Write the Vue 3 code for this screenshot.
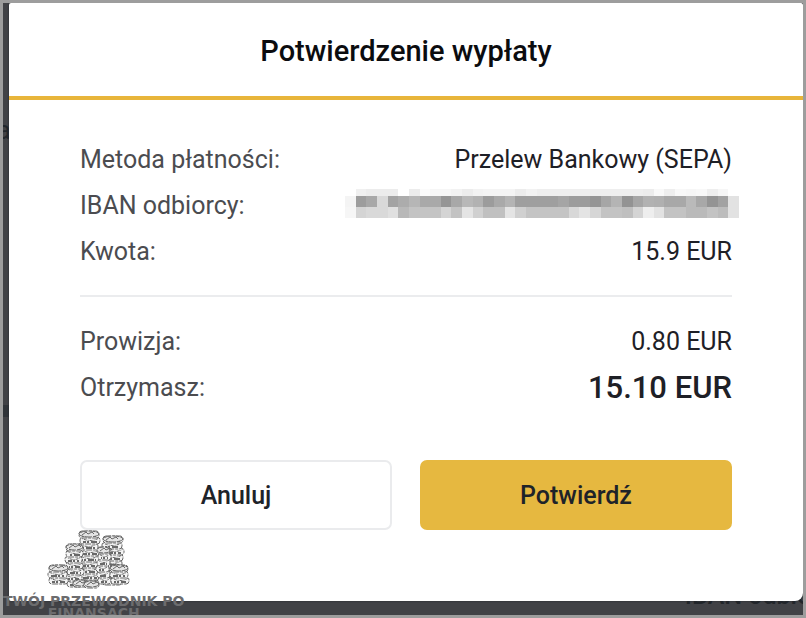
<script setup>
const columnWidth = 32
const top = 'ff f0 ec ec ec ff ec fb f6 f6 f2 ec f2 f4 f4 f4 ec f2 ee ee ee ee ee ee ee ee ee ee ec f8 ee f8 f6 f8 ee f6 ff'.split(' ')
const middle = 'f4 9d a8 d9 a3 ac b6 a9 a9 95 a8 b8 b2 9c a9 b4 9f 9f 9f 9f a5 9c 9c 95 a6 b4 93 a6 b2 b0 a8 a8 ba a8 94 a2 e2'.split(' ')
const bottom = 'f6 d4 d9 d9 e0 b8 c3 c4 c4 d4 c3 e4 d0 c0 c0 e4 d0 c4 c4 c4 c4 d8 e4 d6 c3 c3 bf d4 ee e2 c3 c3 ba ba c3 bc e2'.split(' ')

const bands = [
  { y: 0, height: 21, tones: top },
  { y: 21, height: 33, tones: middle },
  { y: 54, height: 32, tones: bottom },
]

const stacks = [
  { x: 33, y: 0, width: 20, count: 9 },
  { x: 57, y: 5, width: 20, count: 8 },
  { x: 51, y: 16, width: 13, count: 6 },
  { x: 20, y: 13, width: 17, count: 7 },
  { x: 3, y: 34, width: 19, count: 3 },
  { x: 64, y: 34, width: 18, count: 3 },
  { x: 27, y: 49, width: 15, count: 1 },
  { x: 38, y: 50, width: 15, count: 1 },
]

const coins = stacks.flatMap((stack, s) =>
  Array.from({ length: stack.count }, (_, i) => {
    const level = stack.count - 1 - i
    const shift = [0, 1, -1, 1, 0, -1][(level + (level ? s : 0)) % 6]
    return { x: stack.x + shift, y: stack.y + level * 6, width: stack.width, isTop: level === 0, dash: (level * 3 + s) % 7 }
  }),
)

const amounts = [
  { label: 'Prowizja:', value: '0.80 EUR' },
  { label: 'Otrzymasz:', value: '15.10 EUR', total: true },
]
</script>

<template>
  <div class="screen">
    <div class="backdrop" aria-hidden="true">
      <span class="behind behind-left">a</span>
      <span class="behind behind-dot"></span>
      <span class="behind behind-bottom">IBAN odbiorcy</span>
    </div>

    <main class="modal" role="dialog" aria-labelledby="dialog-title">
      <header class="header">
        <h1 id="dialog-title">Potwierdzenie wypłaty</h1>
      </header>
      <div class="body">
        <dl class="details">
          <div class="row">
            <dt>Metoda płatności:</dt>
            <dd>Przelew Bankowy (SEPA)</dd>
          </div>
          <div class="row">
            <dt>IBAN odbiorcy:</dt>
            <dd class="masked">
              <svg class="mosaic" viewBox="0 0 1184 86" preserveAspectRatio="none" shape-rendering="crispEdges">
                <g v-for="band in bands" :key="band.y">
                  <rect
                    v-for="(tone, i) in band.tones"
                    :key="i"
                    :x="i * columnWidth"
                    :y="band.y"
                    :width="columnWidth"
                    :height="band.height"
                    :fill="`#${tone}${tone}${tone}`"
                  />
                </g>
              </svg>
            </dd>
          </div>
          <div class="row">
            <dt>Kwota:</dt>
            <dd>15.9 EUR</dd>
          </div>
        </dl>
        <hr class="divider" />
        <dl class="details">
          <div v-for="item in amounts" :key="item.label" class="row">
            <dt>{{ item.label }}</dt>
            <dd :class="{ total: item.total }">{{ item.value }}</dd>
          </div>
        </dl>
        <div class="actions">
          <button type="button" class="button cancel">Anuluj</button>
          <button type="button" class="button confirm">Potwierdź</button>
        </div>
      </div>
    </main>

    <div class="watermark">
      <svg class="coins" width="84" height="60" viewBox="0 0 84 60" aria-hidden="true">
        <g v-for="(coin, i) in coins" :key="i" fill="none" stroke="#686868">
          <rect
            :x="coin.x"
            :y="coin.y + 1"
            :width="coin.width"
            height="7"
            rx="3"
            fill="#f4f4f4"
            stroke-dasharray="6 1 3 1"
            :stroke-dashoffset="coin.dash"
          />
          <path
            :d="`M${coin.x + 3} ${coin.y + 6}h${coin.width - 6}`"
            stroke-width="2"
            stroke-dasharray="6 1 2 2"
            :stroke-dashoffset="coin.dash"
          />
          <path
            :d="`M${coin.x + 1} ${coin.y + 2}q${coin.width / 2} 5 ${coin.width - 2} 0`"
            stroke-dasharray="3 1 1 1"
            :stroke-dashoffset="coin.dash"
          />
          <ellipse
            v-if="coin.isTop"
            :cx="coin.x + coin.width / 2"
            :cy="coin.y + 4"
            :rx="coin.width / 2"
            ry="3"
            fill="#e4e4e4"
            stroke-dasharray="7 1"
          />
          <path v-if="coin.isTop" :d="`M${coin.x + 3} ${coin.y + 5}l4-3 2 2 4-2 2 2`" />
        </g>
      </svg>
      <p>TWÓJ PRZEWODNIK PO<br />FINANSACH</p>
    </div>
  </div>
</template>

<style>
body {
  margin: 0;
}
</style>

<style scoped>
.screen {
  box-sizing: border-box;
  position: relative;
  min-height: 100vh;
  overflow: hidden;
  padding-left: 6px;
  border: 3px solid #9d9d9d;
  background: #414246;
  font-family: Roboto, "Liberation Sans", sans-serif;
  color: #1e2026;
}

.behind {
  position: absolute;
  color: #22262b;
  font-size: 25px;
  line-height: 30px;
}

.behind-left {
  left: -6px;
  top: 113px;
}

.behind-dot {
  left: 0;
  top: 402px;
  width: 6px;
  height: 12px;
  background: #303439;
}

.behind-bottom {
  right: -42px;
  bottom: 4px;
  font-weight: 500;
}

.modal {
  position: relative;
  background: #fff;
  border-radius: 2px 2px 8px 2px;
  box-shadow: 0 0 2px #202327;
}

.header {
  padding: 30px 24px 27px;
  border-bottom: 4px solid #e8b53a;
  text-align: center;
}

h1 {
  margin: 0;
  font-size: 29px;
  line-height: 36px;
  font-weight: 500;
  color: #0b0c0f;
}

.body {
  padding: 37px 71px 71px;
}

.details {
  margin: 0;
}

.row {
  display: flex;
  align-items: center;
  justify-content: space-between;
  height: 46px;
  font-size: 25px;
  line-height: 46px;
}

dt {
  color: #4b4c50;
}

dd {
  margin: 0;
}

.total {
  font-size: 31px;
  font-weight: 500;
}

.masked {
  display: flex;
  margin: 0 -7px 5px 0;
}

.mosaic {
  width: 394px;
  height: 29px;
}

.divider {
  height: 2px;
  margin: 20px 0 22px;
  border: 0;
  background: #ebecee;
}

.actions {
  display: grid;
  grid-template-columns: 1fr 1fr;
  gap: 28px;
  margin-top: 49px;
}

.button {
  box-sizing: border-box;
  height: 70px;
  padding: 0 16px;
  border: 2px solid #eaebed;
  border-radius: 7px;
  background: #fff;
  color: #1e2329;
  font: 500 25px Roboto, "Liberation Sans", sans-serif;
}

.confirm {
  border-color: #e6b840;
  background: #e6b840;
}

.watermark {
  position: absolute;
  left: 0;
  bottom: -4px;
  display: flex;
  flex-direction: column;
  align-items: flex-start;
  gap: 5px;
  color: #6c6c6e;
}

.coins {
  margin-left: 43px;
}

.watermark p {
  margin: 0;
  font: bold 14px/12px "DejaVu Sans", sans-serif;
  text-align: center;
  white-space: nowrap;
}
</style>
